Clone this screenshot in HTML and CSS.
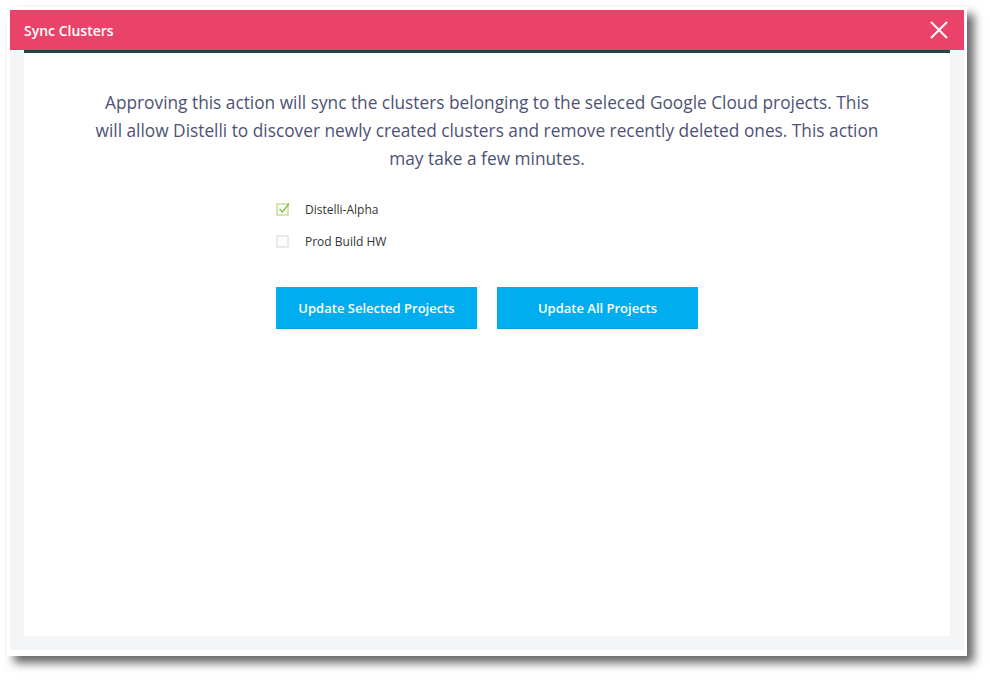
FILE: index.html
```html
<!DOCTYPE html>
<html>
<head>
<meta charset="utf-8">
<link rel="stylesheet" href="styles.css">
</head>
<body>
<div class="modal">
  <div class="header">
    <span class="title">Sync Clusters</span>
    <svg class="close" width="18" height="18" viewBox="0 0 18 18"><path d="M1 1 L17 17 M17 1 L1 17" stroke="#fff" stroke-width="2" fill="none"/></svg>
  </div>
  <div class="panel">
    <div class="content">
      <p class="message">Approving this action will sync the clusters belonging to the seleced Google Cloud projects. This will allow Distelli to discover newly created clusters and remove recently deleted ones. This action may take a few minutes.</p>
      <div class="group">
        <ul class="projects">
          <li class="project">
            <svg class="box" width="14" height="14" viewBox="0 0 14 14"><rect x="1" y="2" width="11" height="11" fill="none" stroke="#b6d77e" stroke-width="1.2"/><path d="M3.5 7 L6.5 10 L13 1.5" stroke="#7cc34a" stroke-width="1.4" fill="none"/></svg>
            <span>Distelli-Alpha</span>
          </li>
          <li class="project">
            <svg class="box" width="14" height="14" viewBox="0 0 14 14"><rect x="1" y="2" width="11" height="11" fill="none" stroke="#dcdcdc" stroke-width="1.2"/></svg>
            <span>Prod Build HW</span>
          </li>
        </ul>
        <div class="actions">
          <button class="btn">Update Selected Projects</button>
          <button class="btn">Update All Projects</button>
        </div>
      </div>
    </div>
  </div>
</div>
</body>
</html>
```

FILE: styles.css
```css
html, body {
  margin: 0;
  padding: 0;
  background: #fff;
  font-family: "Open Sans", "Noto Sans", sans-serif;
}
body {
  min-height: 679px;
  padding-top: 7px;
  box-sizing: border-box;
}
.modal {
  margin: 0 0 0 7px;
  width: 954px;
  height: 640px;
  padding: 3px 3px 6px 3px;
  background: #fff;
  box-shadow: 7px 7px 9px rgba(0, 0, 0, 0.6);
}
.header {
  height: 40px;
  background: #e9436a;
  display: flex;
  align-items: center;
  justify-content: space-between;
  padding: 0 16px 0 14px;
  box-sizing: border-box;
}
.title {
  color: #fff;
  font-size: 14px;
  font-weight: 600;
}
.close {
  display: block;
}
.panel {
  background: #f4f5f7;
  padding: 0 14px 14px;
  height: 600px;
  box-sizing: border-box;
}
.content {
  background: #fff;
  border-top: 3px solid #333d47;
  height: 586px;
  box-sizing: border-box;
  padding-top: 36px;
}
.message {
  margin: 0 auto;
  width: 788px;
  text-align: center;
  font-size: 17.3px;
  line-height: 28px;
  color: #4d5274;
}
.group {
  width: 422px;
  margin: 0 auto;
}
.projects {
  list-style: none;
  margin: 26px 0 0;
  padding: 0;
}
.project {
  display: flex;
  align-items: center;
  height: 20px;
  margin-bottom: 12px;
  font-size: 12px;
  color: #333;
}
.box {
  display: block;
  margin-right: 15px;
}
.actions {
  display: flex;
  gap: 20px;
  margin-top: 36px;
}
.btn {
  width: 201px;
  height: 42px;
  border: none;
  border-bottom: 1px solid #0aa0dc;
  background: #00aeef;
  color: #fff;
  font-family: "Open Sans", "Noto Sans", sans-serif;
  font-size: 13px;
  font-weight: 600;
  padding: 0;
}
```
